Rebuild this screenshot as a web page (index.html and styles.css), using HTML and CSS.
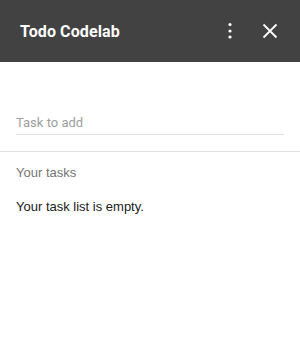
FILE: index.html
```html
<!DOCTYPE html>
<html>
<head>
<meta charset="utf-8">
<link rel="stylesheet" href="styles.css">
</head>
<body>
<header class="bar">
  <h1 class="title">Todo Codelab</h1>
  <div class="actions">
    <button class="icon-btn" aria-label="More">
      <svg width="24" height="24" viewBox="0 0 24 24"><circle cx="12" cy="5.5" r="1.6" fill="#fff"/><circle cx="12" cy="12" r="1.6" fill="#fff"/><circle cx="12" cy="18" r="1.6" fill="#fff"/></svg>
    </button>
    <button class="icon-btn" aria-label="Close">
      <svg width="24" height="24" viewBox="0 0 24 24"><path d="M5.5 5.5 L18.5 18.5 M18.5 5.5 L5.5 18.5" stroke="#fff" stroke-width="1.8" fill="none"/></svg>
    </button>
  </div>
</header>
<section class="add">
  <input class="task-input" type="text" placeholder="Task to add">
</section>
<section class="list">
  <h2 class="list-head">Your tasks</h2>
  <p class="empty">Your task list is empty.</p>
</section>
</body>
</html>
```
FILE: styles.css
```css
html, body {
  margin: 0;
  padding: 0;
  background: #fff;
  font-family: Roboto, "Liberation Sans", sans-serif;
}
.bar {
  height: 62px;
  background: #424242;
  display: flex;
  align-items: center;
  justify-content: space-between;
  padding: 0 18px 0 20px;
}
.title {
  margin: 0;
  color: #fff;
  font-size: 16px;
  font-weight: 700;
  letter-spacing: 0.1px;
}
.actions {
  display: flex;
  align-items: center;
  gap: 16px;
}
.icon-btn {
  width: 24px;
  height: 24px;
  padding: 0;
  border: 0;
  background: none;
  display: flex;
}
.add {
  padding: 48px 16px 16px;
  border-bottom: 1px solid #e0e0e0;
}
.task-input {
  display: block;
  width: 100%;
  box-sizing: border-box;
  border: 0;
  border-bottom: 1px solid #e0e0e0;
  padding: 5px 0 4px;
  font-family: Roboto, sans-serif;
  font-size: 13px;
  color: #212121;
  outline: none;
  background: transparent;
}
.task-input::placeholder {
  color: #9e9e9e;
}
.list {
  padding: 0 16px;
}
.list-head {
  margin: 0;
  padding-top: 13px;
  font-family: "Liberation Sans", Arial, sans-serif;
  font-weight: 400;
  font-size: 13px;
  color: #757575;
}
.empty {
  margin: 0;
  padding-top: 19px;
  font-family: "Liberation Sans", Arial, sans-serif;
  font-size: 13px;
  color: #212121;
}
```
